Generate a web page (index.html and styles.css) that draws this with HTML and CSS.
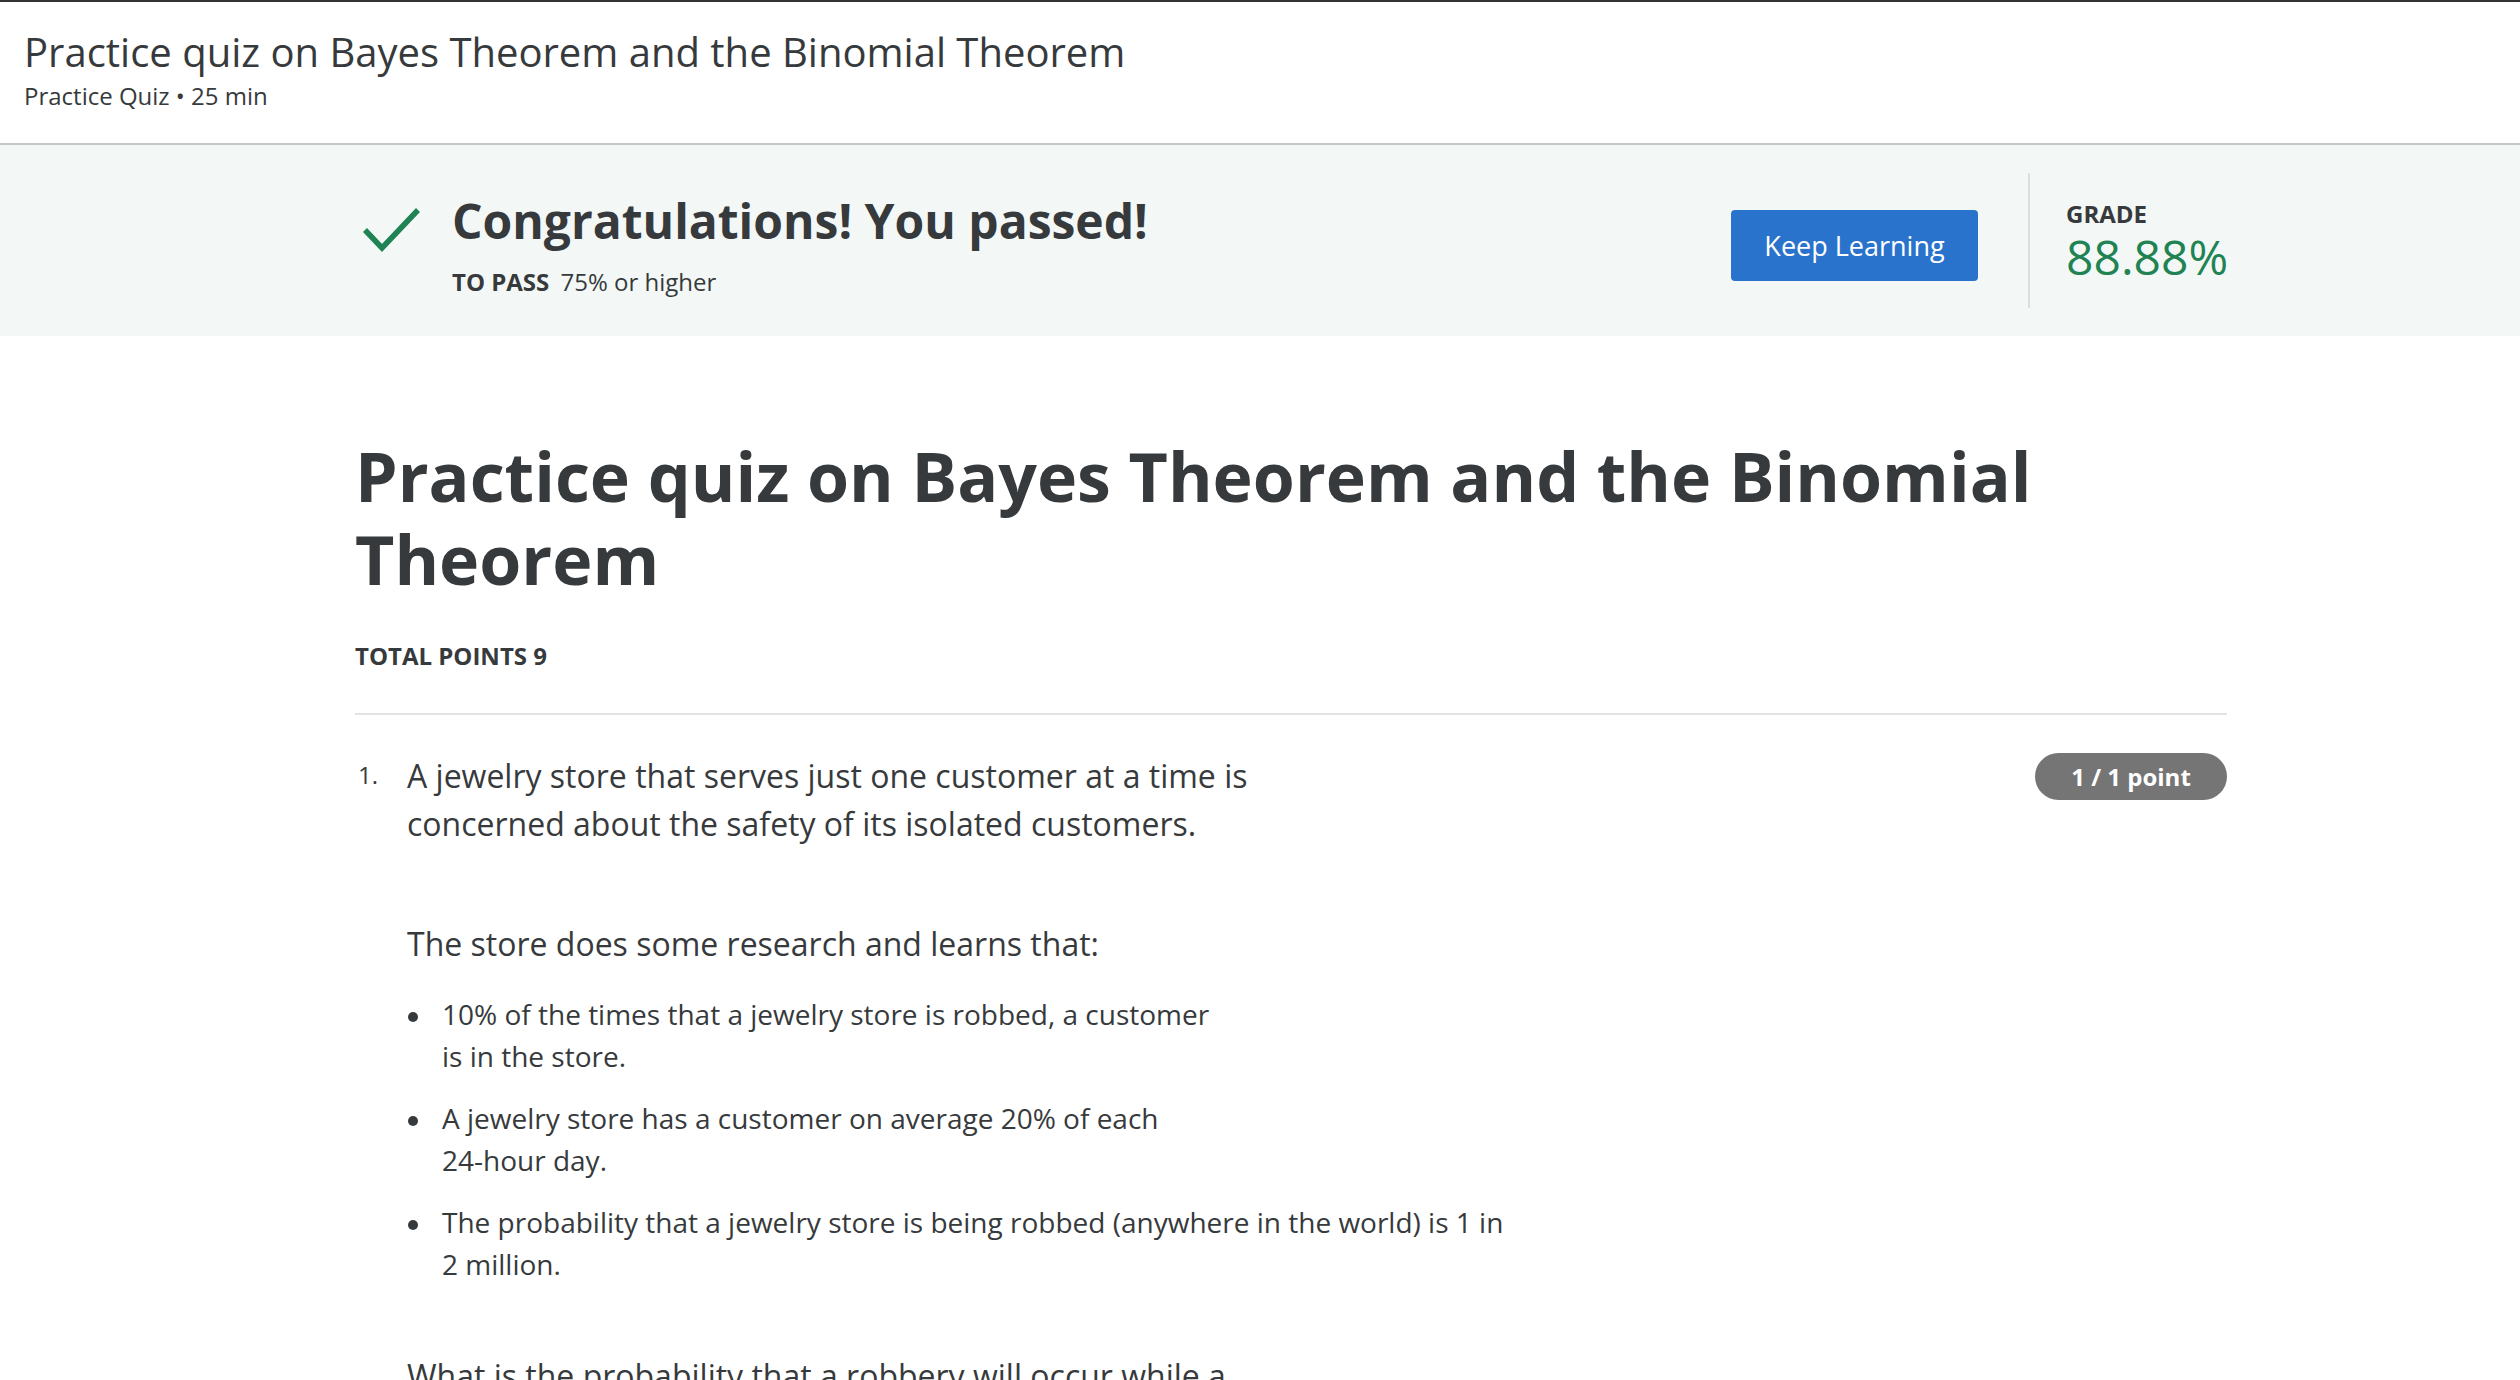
FILE: index.html
```html
<!DOCTYPE html>
<html lang="en">
<head>
<meta charset="utf-8">
<title>Practice quiz on Bayes Theorem and the Binomial Theorem</title>
<link rel="stylesheet" href="styles.css">
</head>
<body>
<header class="top-header">
  <h1 class="top-title">Practice quiz on Bayes Theorem and the Binomial Theorem</h1>
  <div class="top-sub">Practice Quiz • 25 min</div>
</header>

<section class="banner">
  <div class="banner-inner">
    <div class="pass-group">
      <svg class="check" viewBox="0 0 64 52" width="64" height="52" aria-hidden="true">
        <path d="M5 27 L22 45 L58 7" fill="none" stroke="#1f8354" stroke-width="5.5" stroke-linecap="butt" stroke-linejoin="miter"/>
      </svg>
      <div class="pass-text">
        <div class="pass-title">Congratulations! You passed!</div>
        <div class="pass-req"><span class="req-label">TO PASS</span> 75% or higher</div>
      </div>
    </div>
    <div class="grade-group">
      <button class="keep-btn" type="button">Keep Learning</button>
      <div class="divider"></div>
      <div class="grade">
        <div class="grade-label">GRADE</div>
        <div class="grade-value">88.88%</div>
      </div>
    </div>
  </div>
</section>

<main class="content">
  <h2 class="quiz-title">Practice quiz on Bayes Theorem and the Binomial Theorem</h2>
  <div class="total-points">TOTAL POINTS 9</div>
  <hr class="sep">
  <div class="question">
    <div class="q-num">1.</div>
    <div class="q-body">
      <p class="q-para">A jewelry store that serves just one customer at a time is<br>concerned about the safety of its isolated customers.</p>
      <p class="q-para lead">The store does some research and learns that:</p>
      <ul class="q-list">
        <li>10% of the times that a jewelry store is robbed, a customer<br>is in the store.</li>
        <li>A jewelry store has a customer on average 20% of each<br>24-hour day.</li>
        <li>The probability that a jewelry store is being robbed (anywhere in the world) is 1 in<br>2 million.</li>
      </ul>
      <p class="q-para last">What is the probability that a robbery will occur while a<br>customer is in the store?</p>
    </div>
    <div class="badge">1 / 1 point</div>
  </div>
</main>
</body>
</html>
```

FILE: styles.css
```css
html, body {
  margin: 0;
  padding: 0;
  background: #ffffff;
}
body {
  font-family: "Open Sans", "Noto Sans", sans-serif;
  color: #373a3c;
  overflow-x: hidden;
}

/* Top header */
.top-header {
  border-top: 2px solid #333;
  border-bottom: 2px solid #c6c6c6;
  padding: 26px 24px 31px;
}
.top-title {
  margin: 0;
  font-size: 40px;
  line-height: 48px;
  font-weight: 400;
  color: #373a3c;
}
.top-sub {
  margin-top: 4px;
  font-size: 24px;
  line-height: 32px;
  color: #373a3c;
}

/* Banner */
.banner {
  background: #f3f8f6;
  height: 191px;
}
.banner-inner {
  margin-left: 355px;
  width: 1872px;
  height: 191px;
  display: flex;
  justify-content: space-between;
  align-items: center;
}
.pass-group {
  display: flex;
  align-items: flex-start;
  padding-top: 10px;
}
.check {
  display: block;
  margin: 8px 28px 0 5px;
}
.pass-title {
  font-size: 48px;
  line-height: 52px;
  font-weight: 700;
  color: #373a3c;
}
.pass-req {
  margin-top: 20px;
  font-size: 24px;
  line-height: 30px;
}
.req-label {
  font-weight: 700;
  margin-right: 5px;
}
.grade-group {
  display: flex;
  align-items: center;
}
.keep-btn {
  width: 247px;
  height: 71px;
  margin-top: 10px;
  border: none;
  border-radius: 4px;
  background: #2a73cc;
  color: #ffffff;
  font-family: "Open Sans", "Noto Sans", sans-serif;
  font-size: 27px;
  padding: 0;
}
.divider {
  width: 2px;
  height: 135px;
  background: #dedede;
  margin-left: 50px;
  margin-right: 36px;
}
.grade {
  width: 161px;
  padding-top: 3px;
}
.grade-label {
  font-size: 24px;
  line-height: 28px;
  font-weight: 700;
  color: #373a3c;
}
.grade-value {
  margin-top: 2px;
  font-size: 48px;
  line-height: 54px;
  color: #1f8354;
}

/* Main content */
.content {
  margin-left: 355px;
  width: 1872px;
  padding-top: 98px;
}
.quiz-title {
  margin: 0;
  font-size: 68px;
  line-height: 83px;
  font-weight: 700;
  color: #373a3c;
}
.total-points {
  margin-top: 41px;
  font-size: 24px;
  line-height: 30px;
  font-weight: 700;
}
.sep {
  margin: 42px 0 0;
  border: none;
  height: 2px;
  background: #e3e3e3;
}
.question {
  display: flex;
  align-items: flex-start;
  padding-top: 37px;
}
.q-num {
  width: 52px;
  flex: none;
  font-size: 24px;
  line-height: 32px;
  margin-top: 7px;
  padding-left: 3px;
  box-sizing: border-box;
}
.q-body {
  flex: 1;
}
.q-para {
  margin: 0;
  font-size: 32px;
  line-height: 48px;
}
.q-para.lead {
  margin-top: 72px;
}
.q-list {
  margin: 25px 0 0;
  padding-left: 35px;
  font-size: 28px;
  line-height: 42px;
  list-style: none;
}
.q-list li {
  position: relative;
}
.q-list li::before {
  content: "";
  position: absolute;
  left: -34px;
  top: 19px;
  width: 10px;
  height: 10px;
  border-radius: 50%;
  background: #373a3c;
}
.q-list li + li {
  margin-top: 20px;
}
.q-para.last {
  margin-top: 67px;
}
.badge {
  flex: none;
  margin-top: 1px;
  width: 192px;
  height: 47px;
  border-radius: 24px;
  background: #757575;
  color: #ffffff;
  font-size: 24px;
  font-weight: 700;
  line-height: 47px;
  text-align: center;
}
```
